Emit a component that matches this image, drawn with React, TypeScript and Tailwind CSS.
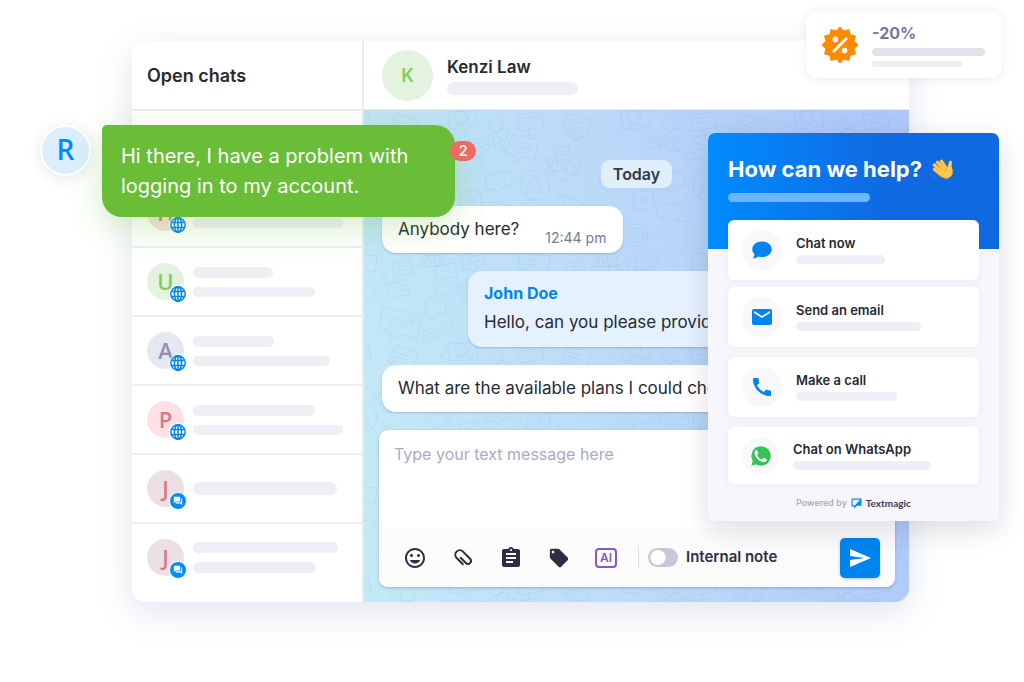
import type { ReactNode } from "react";
import {
  MdAssignment,
  MdCall,
  MdEmail,
  MdForum,
  MdLocalOffer,
  MdOutlineInsertEmoticon,
  MdSend,
} from "react-icons/md";

type Chat = {
  letter: string;
  avatar: string;
  badge: "web" | "chat";
  bars: string[];
};

const chats: Chat[] = [
  { letter: "H", avatar: "bg-[#f6e3da] text-[#d9825b]", badge: "web", bars: ["h-[11px] w-[80px]", "h-[10px] w-[150px]"] },
  { letter: "U", avatar: "bg-[#e3f3e0] text-[#84cc5c]", badge: "web", bars: ["h-[11px] w-[80px]", "h-[10px] w-[122px]"] },
  { letter: "A", avatar: "bg-[#e4e8f1] text-[#8c93ad]", badge: "web", bars: ["h-[11px] w-[81px]", "h-[10px] w-[137px]"] },
  { letter: "P", avatar: "bg-[#ffe1e3] text-[#dc7587]", badge: "web", bars: ["h-[11px] w-[122px]", "h-[10px] w-[150px]"] },
  { letter: "J", avatar: "bg-[#ede0e5] text-[#dc7587]", badge: "chat", bars: ["h-[13px] w-[144px]"] },
  { letter: "J", avatar: "bg-[#ede0e5] text-[#dc7587]", badge: "chat", bars: ["h-[11px] w-[145px]", "h-[11px] w-[123px]"] },
];

function GlobeIcon() {
  return (
    <svg viewBox="0 0 18 18" className="block size-[18px]" aria-hidden="true">
      <circle cx="9" cy="9" r="9" fill="#fff" />
      <g fill="none" stroke="#0084f0" strokeWidth="1.5">
        <circle cx="9" cy="9" r="7.2" />
        <ellipse cx="9" cy="9" rx="3.6" ry="7.2" />
        <path d="M9 1.8v14.4M2.4 6.4h13.2M2.4 11.6h13.2" />
      </g>
    </svg>
  );
}

function PaperclipIcon() {
  return (
    <svg viewBox="0 0 24 24" className="size-6" aria-hidden="true">
      <path
        d="M7.5 17V7.5a4.5 4.5 0 0 1 9 0v10a3 3 0 0 1-6 0V9.500"
        transform="rotate(-45 12 12)"
        fill="none"
        stroke="currentColor"
        strokeWidth="2"
      />
    </svg>
  );
}

function ChatRow({ chat }: { chat: Chat }) {
  return (
    <li className="border-b-2 border-[#eeeef5] last:border-b-0">
      <button type="button" aria-label={`Chat ${chat.letter}`} className="flex h-[67px] w-full items-center gap-[9px] pl-[15px]">
        <span className={`relative flex size-[37px] shrink-0 items-center justify-center rounded-full font-['Open_Sans',sans-serif] text-[22px] font-semibold ${chat.avatar}`}>
          {chat.letter}
          <span className="absolute -right-[3px] -bottom-[3px]">
            {chat.badge === "web" ? (
              <GlobeIcon />
            ) : (
              <span className="flex size-[18px] items-center justify-center rounded-full border border-white bg-[#008cff] text-white">
                <MdForum className="size-[10px]" />
              </span>
            )}
          </span>
        </span>
        <span className="flex flex-col gap-[9px]">
          {chat.bars.map((bar, i) => (
            <span key={i} className={`block rounded-full bg-[#eeeff5] ${bar}`} />
          ))}
        </span>
      </button>
    </li>
  );
}

function Wallpaper() {
  return (
    <svg className="absolute inset-0 size-full" aria-hidden="true">
      <defs>
        <pattern id="doodles" width="173" height="232" patternUnits="userSpaceOnUse">
          <g fill="none" stroke="#5c86b8" strokeOpacity="0.1" strokeWidth="1" strokeLinejoin="round" strokeLinecap="round">
            <path d="M84 2l28-2 2 16-10 1-3 5-5-4-10 1zM93 7v1M101 6v1M93 11q4 4 9 0" />
            <circle cx="97" cy="8" r="7" />
            <path d="M153 5l24-3 3 15-24 4zM-20 5l24-3 3 15-24 4M164 20l1 5M160 26l12-2M-9 20l1 5M-13 26l12-2M158 9l12-2M159 13l9-1" />
            <path d="M32 4l22 6-5 17-6-1-5 4-1-6-12-4zM31 10l14 4M30 14l13 4M29 18l10 3M26 21l12 10 8-4" />
            <path d="M124 13l11-5 5 10-9 4zM136 18l9 3-3 8-9-3z" />
            <circle cx="127" cy="27" r="3" />
            <circle cx="138" cy="33" r="3" />
            <path d="M122 35q5-7 10 0zM133 41q5-7 10 0z" />
            <path d="M148 25l26 4-3 20-14-1-7 5v-8l-8-2zM153 32l15 3M152 37l14 2M151 42l9 1" />
            <path d="M18 39l13-3 4 15-14 4zM22 42l8-2M23 46l8-2M24 50l6-1" />
            <circle cx="13" cy="52" r="3" />
            <circle cx="40" cy="56" r="3" />
            <path d="M8 61q5-8 10 0zM35 65q5-8 10 0zM16 62l14-3 2 10-12 2z" />
            <path d="M104 32l16-5 5 11-8 6-2 5-4-4zM109 35l10-4M111 39l9-3" />
            <path d="M122 65l24-4 3 14-12 3-3 5-4-4-7 1zM129 72h1M135 71h1M141 70h1" />
            <circle cx="171" cy="75" r="15" />
            <circle cx="-2" cy="75" r="15" />
            <path d="M170 65l8 18-8-4-8 5zM-3 65l8 18-8-4-8 5z" />
            <path d="M22 84l26 10-4 22-32-8zM22 84l7 15 19-5" />
            <path d="M62 69l8-6 7 5 7-5 6 7-10 13-6 3-11-10zM70 74l6-6 9 9" />
            <path d="M96 83l19-4 3 17-8 2-2 4-4-3-6 1zM105 86l6 4-5 4z" />
            <path d="M122 92l22 3-2 15-10-1-5 4v-6l-7-1zM146 100l8 3-4 9-8-2" />
            <circle cx="100" cy="125" r="11" />
            <circle cx="100" cy="125" r="7" />
            <path d="M97 123v1M103 123v1M97 128q3 3 6 0M91 132l-5 5M108 133l2 5" />
            <path d="M98 146l20-5 4 13-9 3-2 5-5-3-6 1zM103 148l13-3M105 153l12-3" />
            <circle cx="60" cy="147" r="3" />
            <circle cx="68" cy="148" r="3" />
            <circle cx="77" cy="147" r="3" />
            <path d="M55 156q5-8 9 0 4-8 9 0 4-8 9 0z" />
            <path d="M156 143l30 3-2 16-13-1-5 4-1-5-10-1zM-17 143l30 3-2 16-13-1-5 4M162 149l16 2M161 154l14 2" />
            <path d="M72 156l19-3 2 13-10 2-5 4-1-5-5 1zM78 161h1M82 160h1M86 160h1" />
            <path d="M28 154l17-4 4 13-17 4zM33 157l9-2M34 161l9-2M22 174l21-4 3 14-20 4z" />
            <circle cx="20" cy="164" r="3" />
            <circle cx="39" cy="178" r="3" />
            <path d="M62 190l8-3 3-7 7 5 6-3 2 8-7 5 1 8-8 1-4 6-8-5z" />
            <path d="M20 197l38 9-5 22-15-3-12 5 1-8-12-5zM24 219l9-12 7 8 4-4 8 9" />
            <circle cx="48" cy="211" r="2" />
            <circle cx="66" cy="227" r="8" />
            <circle cx="66" cy="227" r="4" />
            <path d="M92 176l14-5 5 15-12 5zM97 178l8-3M98 182l8-3M124 178l18 3-3 18-18-3zM130 186l6 4-7 2z" />
            <circle cx="154" cy="194" r="9" />
            <path d="M150 194l4 4 5-8M108 204l20-4 3 15-12 3-3 5-4-4zM140 214l12 6-5 10-12-5zM2 176l10 5-4 10-10-5z" />
          </g>
          <g fill="#5c86b8" fillOpacity="0.07">
            <circle cx="77" cy="14" r="1.5" />
            <circle cx="118" cy="57" r="1.5" />
            <circle cx="56" cy="36" r="1.5" />
            <circle cx="148" cy="120" r="1.5" />
            <circle cx="84" cy="108" r="1.5" />
            <circle cx="52" cy="180" r="1.5" />
            <circle cx="8" cy="130" r="1.5" />
            <circle cx="135" cy="165" r="1.5" />
            <circle cx="88" cy="212" r="1.5" />
          </g>
        </pattern>
      </defs>
      <rect width="100%" height="100%" fill="url(#doodles)" />
    </svg>
  );
}

function WavingHand() {
  return (
    <svg viewBox="0 0 24 24" className="size-6" role="img" aria-label="Waving hand">
      <g stroke="#f0a92c" strokeWidth="3.4" strokeLinecap="round" fill="none">
        <path d="M11 18L4.5 12.4M12.5 15L4.2 8M14 12.5L7.3 5.2M16 11L11.4 4.2" />
      </g>
      <path d="M9 16c1 4 6 7 10 4.6 3.6-2.2 4-6 3-9.4-.6-2.2-.2-4.2 0-6 .1-1.7-2.4-2.2-3-.4l-1.2 4.4z" fill="#ffc94d" />
      <g stroke="#ffc94d" strokeWidth="2.6" strokeLinecap="round" fill="none">
        <path d="M11 17.5L4.5 12.2M12.5 15L4.4 7.8M14.5 13L7.5 5.1M16.5 12L11.6 4.2" />
      </g>
      <path d="M10 17c2 3.5 6 5.5 9.6 3.3 3.2-2 3.5-5.4 2.7-8.3" fill="none" stroke="#eda62d" strokeWidth="0.9" />
      <path d="M15.4 15.8c-.4-2.6.6-4.4 2.8-6" fill="none" stroke="#eda62d" strokeWidth="0.9" />
      <g stroke="#54708f" strokeWidth="1" strokeLinecap="round" fill="none">
        <path d="M14.6 1.4c1.5.4 2.3 1.2 2.8 2.6M14.4 3.2c.7.3 1 .7 1.3 1.4M1 16.4c.6 2.5 2 4 4.4 4.6M2.9 16.6c.5 1.3 1.2 2 2.5 2.5" />
      </g>
    </svg>
  );
}

function ChatBubbleIcon() {
  return (
    <svg viewBox="0 0 20 18" className="h-[18px] w-5" aria-hidden="true">
      <path d="M10 .6C4.6.6.3 4 .3 8.3c0 2 .9 3.7 2.3 5-.2 1.4-.7 2.6-1.5 3.5-.2.3 0 .6.3.6 2 0 3.6-.8 4.8-1.8 1.2.4 2.4.5 3.8.5 5.4 0 9.7-3.5 9.7-7.8S15.4.6 10 .6z" fill="#0084f0" />
    </svg>
  );
}

function WhatsAppIcon() {
  return (
    <svg viewBox="0 0 24 24" className="size-6" aria-hidden="true">
      <path d="M12 1.8A10.2 10.2 0 0 0 3.2 17.2L1.6 22.4l5.4-1.5A10.2 10.2 0 1 0 12 1.8z" fill="#35c353" stroke="#fff" strokeWidth="1" />
      <path d="M8.3 6.5c-.3-.5-.6-.5-1-.4-1.3.5-1.9 1.7-1.7 3.1.6 4.2 4.6 8.2 8.9 8.9 1.6.2 3-.6 3.4-2 .1-.5.1-.8-.3-1l-2.4-1.2c-.4-.2-.7-.1-1 .3l-.9 1.1c-.2.3-.5.3-.8.2-2-.9-3.3-2.2-4.2-4-.2-.3-.1-.5.1-.8l.8-.9c.2-.3.2-.5.1-.8z" fill="#fff" />
    </svg>
  );
}

function DiscountIcon() {
  return (
    <svg viewBox="0 0 38 38" className="size-[38px]" aria-hidden="true">
      <path
        d="M19 1.5L22.6 5.3L27.75 3.85L29.05 8.95L34.15 10.25L32.7 15.4L36.5 19L32.7 22.6L34.15 27.75L29.05 29.05L27.75 34.15L22.6 32.7L19 36.5L15.4 32.7L10.25 34.15L8.95 29.05L3.85 27.75L5.3 22.6L1.5 19L5.3 15.4L3.85 10.25L8.95 8.95L10.25 3.85L15.4 5.3Z"
        fill="#ff8a00"
        stroke="#ff8a00"
        strokeWidth="1.5"
        strokeLinejoin="round"
      />
      <path d="M12.8 25.2L25.2 12.8" stroke="#fff" strokeWidth="2.8" strokeLinecap="round" />
      <circle cx="14.4" cy="13.4" r="2.8" fill="#fff" />
      <circle cx="23.6" cy="24.6" r="2.8" fill="#fff" />
    </svg>
  );
}

function TextmagicMark() {
  return (
    <svg viewBox="0 0 11 11" className="size-[11px]" aria-hidden="true">
      <path d="M.5.5h10v7.2H6L3 10.6V8.4H.5z" fill="#008cff" />
      <path d="M1.7 1.7h7.300L4 7.300H1.700z" fill="#f6f6fc" />
    </svg>
  );
}

type HelpOption = { title: string; bar: string; icon: ReactNode; circle: string };

const options: HelpOption[] = [
  { title: "Chat now", bar: "w-[89px]", icon: <ChatBubbleIcon />, circle: "size-10" },
  { title: "Send an email", bar: "w-[125px]", icon: <MdEmail className="size-6" />, circle: "size-10" },
  { title: "Make a call", bar: "w-[101px]", icon: <MdCall className="size-6" />, circle: "size-10" },
  { title: "Chat on WhatsApp", bar: "w-[138px]", icon: <WhatsAppIcon />, circle: "size-[37px]" },
];

function OptionCard({ option }: { option: HelpOption }) {
  return (
    <button
      type="button"
      className="flex w-full items-center gap-[14px] rounded-[6px] bg-white py-[10px] pl-[14px] text-left shadow-[0_1px_8px_rgba(60,60,110,0.06)]"
    >
      <span className={`flex items-center justify-center rounded-full bg-[#f7f7fc] text-[#0084f0] ${option.circle}`}>{option.icon}</span>
      <span className="flex flex-col gap-[3px] pb-[2px]">
        <span className="text-[13px] leading-[18px] font-semibold text-[#272a31]">{option.title}</span>
        <span className={`block h-[9px] rounded-full bg-[#eeeff5] ${option.bar}`} />
      </span>
    </button>
  );
}

function HelpWidget() {
  const [first, ...rest] = options;
  return (
    <section className="absolute top-[133px] right-[25px] w-[291px] overflow-hidden rounded-[7px] bg-[#f6f6fc] shadow-[0_8px_28px_rgba(40,40,70,0.16)]">
      <div className="h-[116px] bg-linear-to-r from-[#008cff] to-[#0f6ae2] to-60% px-5 pt-[21px]">
        <h2 className="flex items-center gap-2 text-[22px] leading-[30px] font-bold whitespace-nowrap text-white">
          How can we help?
          <WavingHand />
        </h2>
        <div className="mt-[9px] mb-[18px] h-[9px] w-[142px] rounded-full bg-[#69b8ff]" />
        <OptionCard option={first} />
      </div>
      <div className="mt-[38px] flex flex-col gap-[10px] px-5">
        {rest.map((option) => (
          <OptionCard key={option.title} option={option} />
        ))}
      </div>
      <p className="flex items-center justify-center gap-1 pt-[13px] pb-3 text-[9px] leading-3 font-medium text-[#a5a6c2]">
        Powered by
        <TextmagicMark />
        <span className="font-['Lato',sans-serif] text-[10px] font-bold text-[#3b3d50]">Textmagic</span>
      </p>
    </section>
  );
}

function Composer() {
  return (
    <form className="mr-[14px] ml-[15px] overflow-hidden rounded-[9px] bg-white shadow-[0_1px_3px_rgba(70,80,140,0.35)]">
      <textarea
        aria-label="Message"
        placeholder="Type your text message here"
        className="block h-[98px] w-full resize-none px-[15px] pt-3 text-[16px] leading-6 text-[#2b2d38] outline-none placeholder:text-[#a9abc6]"
      />
      <div className="flex h-[59px] items-center bg-[#fcfcfd] pr-[15px] pl-6 text-[#2f2e41]">
        <div className="flex items-center gap-6">
          <button type="button" aria-label="Insert emoji">
            <MdOutlineInsertEmoticon className="size-6" />
          </button>
          <button type="button" aria-label="Attach file">
            <PaperclipIcon />
          </button>
          <button type="button" aria-label="Templates">
            <MdAssignment className="size-6" />
          </button>
          <button type="button" aria-label="Tags">
            <MdLocalOffer className="size-6 p-px" />
          </button>
          <button
            type="button"
            className="flex h-5 w-[22px] items-center justify-center rounded-[4px] border-2 border-[#8558d3] text-[12px] leading-none font-semibold text-[#8558d3]"
          >
            AI
          </button>
        </div>
        <div className="ml-[21px] h-[23px] w-px bg-[#dfe0ef]" />
        <label className="ml-[9px] flex items-center gap-2 text-[15px] font-semibold whitespace-nowrap">
          <input
            type="checkbox"
            className="h-[19px] w-[30px] appearance-none rounded-full bg-[#c7c7d8] bg-[radial-gradient(circle_at_10px_50%,white_7px,transparent_8px)] checked:bg-[#0084f0]"
          />
          Internal note
        </label>
        <button
          type="submit"
          aria-label="Send"
          className="ml-auto flex size-10 items-center justify-center rounded-[5px] bg-[#0084f0] text-white shadow-[0_1px_3px_rgba(0,60,140,0.3)]"
        >
          <MdSend className="size-6" />
        </button>
      </div>
    </form>
  );
}

export default function App() {
  return (
    <div className="relative min-h-screen overflow-hidden bg-white pt-[41px] pr-[115px] pb-20 pl-[132px] font-['Inter',sans-serif] text-[#272a31]">
      <main className="flex overflow-hidden rounded-[14px] bg-white shadow-[0_10px_36px_rgba(60,75,140,0.15)]">
        <aside className="w-[232px] shrink-0 border-r-2 border-[#ebebf4]">
          <h1 className="flex h-[70px] items-center border-b-2 border-[#eeeef5] pl-[15px] text-[18px] font-semibold">Open chats</h1>
          <ul className="pt-[68px]">
            {chats.map((chat, i) => (
              <ChatRow key={i} chat={chat} />
            ))}
          </ul>
        </aside>

        <section className="flex min-w-0 flex-1 flex-col">
          <header className="flex h-[69px] items-center gap-[14px] border-b border-[#ebebf4] pl-[18px]">
            <span className="flex size-[51px] items-center justify-center rounded-full bg-[#e3f3e0] text-[18px] font-semibold text-[#84cc5c]">K</span>
            <div className="flex flex-col gap-[3px]">
              <h2 className="text-[17px] leading-6 font-semibold">Kenzi Law</h2>
              <div className="h-[13px] w-[131px] rounded-full bg-[#eeeff5]" />
            </div>
          </header>

          <div className="relative flex-1 bg-[linear-gradient(80deg,#c3e8f6_5%,#bcdcf8_42%,#adc8fa_95%)]">
            <Wallpaper />
            <div className="relative flex flex-col gap-[18px] pt-[50px] pb-[15px]">
              <div className="flex h-7 items-center self-center rounded-[9px] bg-[#e0eefc] px-3 text-[16px] font-semibold text-[#363748]">Today</div>
              <div className="ml-[18px] flex h-[47px] items-center gap-[26px] self-start rounded-[14px] bg-white pr-[17px] pl-4 text-[17px] whitespace-nowrap shadow-[0_1px_2px_rgba(70,90,140,0.3)]">
                Anybody here?
                <time className="pt-4 text-[14px] text-[#77799a]">12:44 pm</time>
              </div>
              <div className="mr-[14px] ml-[104px] flex h-[76px] flex-col justify-center gap-[5px] overflow-hidden rounded-[14px] bg-[#e5f1ff] pb-[3px] pl-4 whitespace-nowrap shadow-[0_1px_2px_rgba(70,90,140,0.3)]">
                <strong className="text-[16px] leading-6 font-bold text-[#0084f0]">John Doe</strong>
                <p className="text-[17px] leading-6">Hello, can you please provide</p>
              </div>
              <div className="mr-[104px] ml-[18px] flex h-[47px] items-center overflow-hidden rounded-[14px] bg-white pl-4 text-[17px] whitespace-nowrap shadow-[0_1px_2px_rgba(70,90,140,0.3)]">
                What are the available plans I could choose
              </div>
              <Composer />
            </div>
          </div>
        </section>
      </main>

      <div className="absolute top-[125px] left-10 flex items-start gap-[11px]">
        <span className="flex size-[51px] items-center justify-center rounded-full border-2 border-white bg-[#dceefe] pb-[3px] font-['Open_Sans',sans-serif] text-[28px] font-semibold text-[#008cff] shadow-[0_2px_14px_rgba(40,50,90,0.12)]">
          R
        </span>
        <div className="relative w-[353px] rounded-[20px] rounded-tl-[5px] bg-[#6abd36] px-[19px] py-4 text-[20px] leading-[30px] text-white shadow-[0_10px_36px_rgba(106,189,54,0.28)]">
          Hi there, I have a problem with logging in to my account.
          <span className="absolute top-4 -right-[21px] flex h-5 w-[26px] items-center justify-center rounded-full bg-[#ee6b61] text-[15px] leading-5 font-medium">2</span>
        </div>
      </div>

      <div className="absolute top-[11px] right-[22px] flex h-[67px] w-[196px] items-center gap-[13px] rounded-[12px] bg-white pl-[15px] shadow-[0_1px_10px_rgba(50,50,90,0.1)]">
        <DiscountIcon />
        <div className="flex flex-col gap-[5px]">
          <p className="text-[16px] leading-5 font-bold text-[#77799a]">-20%</p>
          <div className="h-2 w-[113px] rounded-full bg-[#e3e2ec]" />
          <div className="h-[6px] w-[90px] rounded-full bg-[#eeeff5]" />
        </div>
      </div>

      <HelpWidget />
    </div>
  );
}
